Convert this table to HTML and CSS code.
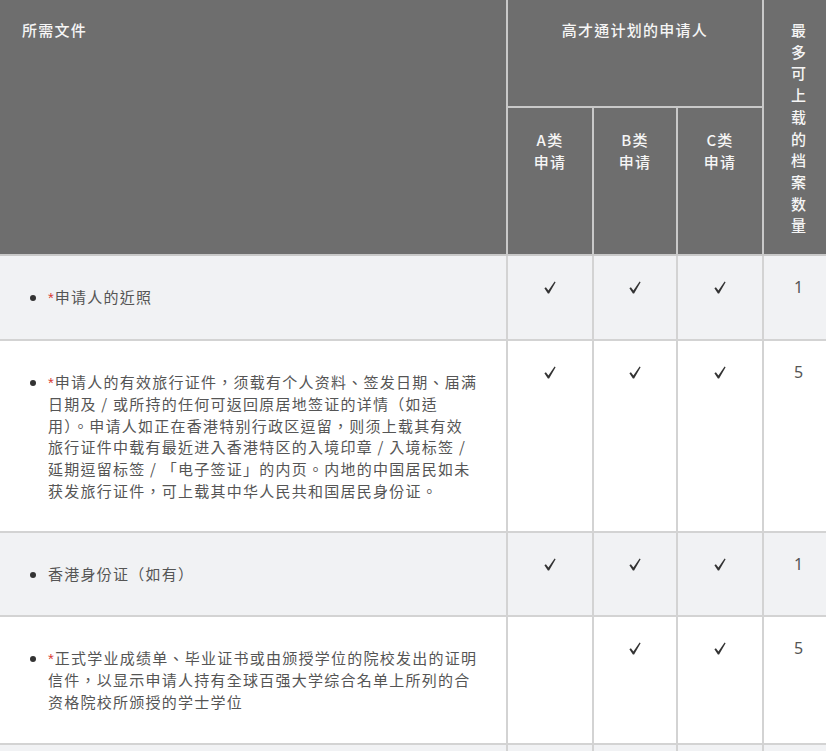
FILE: index.html
```html
<!DOCTYPE html>
<html lang="zh-Hant">
<head>
<meta charset="utf-8">
<title>所需文件</title>
<link rel="stylesheet" href="styles.css">
</head>
<body>
<table class="docs">
  <colgroup>
    <col class="c-doc">
    <col class="c-a">
    <col class="c-b">
    <col class="c-c">
    <col class="c-max">
  </colgroup>
  <thead>
    <tr>
      <th rowspan="2" class="h-doc">所需文件</th>
      <th colspan="3" class="h-group">高才通计划的申请人</th>
      <th rowspan="2" class="h-max"><div class="vert">最多可上载的档案数量</div></th>
    </tr>
    <tr>
      <th class="h-cat">A类<br>申请</th>
      <th class="h-cat">B类<br>申请</th>
      <th class="h-cat">C类<br>申请</th>
    </tr>
  </thead>
  <tbody>
    <tr class="alt">
      <td class="doc"><ul><li><span class="req">*</span>申请人的近照</li></ul></td>
      <td class="mark"><svg class="tick" viewBox="0 0 12 13" width="12" height="13"><path d="M0.4 7.2 L1.9 6.2 L4.4 9.6 L10.6 0.4 L11.6 1.2 L5.1 12.6 L3.9 12.6 Z"/></svg></td>
      <td class="mark"><svg class="tick" viewBox="0 0 12 13" width="12" height="13"><path d="M0.4 7.2 L1.9 6.2 L4.4 9.6 L10.6 0.4 L11.6 1.2 L5.1 12.6 L3.9 12.6 Z"/></svg></td>
      <td class="mark"><svg class="tick" viewBox="0 0 12 13" width="12" height="13"><path d="M0.4 7.2 L1.9 6.2 L4.4 9.6 L10.6 0.4 L11.6 1.2 L5.1 12.6 L3.9 12.6 Z"/></svg></td>
      <td class="num">1</td>
    </tr>
    <tr>
      <td class="doc"><ul><li><span class="req">*</span>申请人的有效旅行证件，须载有个人资料、签发日期、届满<br>日期及 / 或所持的任何可返回原居地签证的详情（如适<br>用）。申请人如正在香港特别行政区逗留，则须上载其有效<br>旅行证件中载有最近进入香港特区的入境印章 / 入境标签 /<br>延期逗留标签 / 「电子签证」的内页。内地的中国居民如未<br>获发旅行证件，可上载其中华人民共和国居民身份证。</li></ul></td>
      <td class="mark"><svg class="tick" viewBox="0 0 12 13" width="12" height="13"><path d="M0.4 7.2 L1.9 6.2 L4.4 9.6 L10.6 0.4 L11.6 1.2 L5.1 12.6 L3.9 12.6 Z"/></svg></td>
      <td class="mark"><svg class="tick" viewBox="0 0 12 13" width="12" height="13"><path d="M0.4 7.2 L1.9 6.2 L4.4 9.6 L10.6 0.4 L11.6 1.2 L5.1 12.6 L3.9 12.6 Z"/></svg></td>
      <td class="mark"><svg class="tick" viewBox="0 0 12 13" width="12" height="13"><path d="M0.4 7.2 L1.9 6.2 L4.4 9.6 L10.6 0.4 L11.6 1.2 L5.1 12.6 L3.9 12.6 Z"/></svg></td>
      <td class="num">5</td>
    </tr>
    <tr class="alt">
      <td class="doc"><ul><li>香港身份证（如有）</li></ul></td>
      <td class="mark"><svg class="tick" viewBox="0 0 12 13" width="12" height="13"><path d="M0.4 7.2 L1.9 6.2 L4.4 9.6 L10.6 0.4 L11.6 1.2 L5.1 12.6 L3.9 12.6 Z"/></svg></td>
      <td class="mark"><svg class="tick" viewBox="0 0 12 13" width="12" height="13"><path d="M0.4 7.2 L1.9 6.2 L4.4 9.6 L10.6 0.4 L11.6 1.2 L5.1 12.6 L3.9 12.6 Z"/></svg></td>
      <td class="mark"><svg class="tick" viewBox="0 0 12 13" width="12" height="13"><path d="M0.4 7.2 L1.9 6.2 L4.4 9.6 L10.6 0.4 L11.6 1.2 L5.1 12.6 L3.9 12.6 Z"/></svg></td>
      <td class="num">1</td>
    </tr>
    <tr>
      <td class="doc"><ul><li><span class="req">*</span>正式学业成绩单、毕业证书或由颁授学位的院校发出的证明<br>信件，以显示申请人持有全球百强大学综合名单上所列的合<br>资格院校所颁授的学士学位</li></ul></td>
      <td class="mark"></td>
      <td class="mark"><svg class="tick" viewBox="0 0 12 13" width="12" height="13"><path d="M0.4 7.2 L1.9 6.2 L4.4 9.6 L10.6 0.4 L11.6 1.2 L5.1 12.6 L3.9 12.6 Z"/></svg></td>
      <td class="mark"><svg class="tick" viewBox="0 0 12 13" width="12" height="13"><path d="M0.4 7.2 L1.9 6.2 L4.4 9.6 L10.6 0.4 L11.6 1.2 L5.1 12.6 L3.9 12.6 Z"/></svg></td>
      <td class="num">5</td>
    </tr>
    <tr class="alt">
      <td class="doc"><ul class="blank"><li>&nbsp;</li></ul></td>
      <td class="mark"></td>
      <td class="mark"></td>
      <td class="mark"></td>
      <td class="num"></td>
    </tr>
  </tbody>
</table>
</body>
</html>
```
FILE: styles.css
```css
html, body {
  margin: 0;
  padding: 0;
  overflow: hidden;
  background: #ffffff;
}

body {
  font-family: "Noto Sans CJK TC", "Noto Sans CJK SC", "Noto Sans", sans-serif;
  font-size: 15px;
  line-height: 22px;
  letter-spacing: 1.25px;
  color: #555555;
}

.docs {
  border-collapse: collapse;
  table-layout: fixed;
  width: 834px;
}

.c-doc { width: 507px; }
.c-a { width: 86px; }
.c-b { width: 84px; }
.c-c { width: 86px; }
.c-max { width: 71px; }

.docs th,
.docs td {
  border: 2px solid #d3d3d3;
  vertical-align: top;
}

.docs th:first-child,
.docs td:first-child {
  border-left: none;
}

.docs thead tr:first-child th {
  border-top: none;
}

.docs th {
  background: #6e6e6e;
  color: #f5f5f5;
  font-weight: 500;
  border-color: #c9c9c9;
}

.docs .h-doc {
  text-align: left;
  padding: 19px 22px 0;
}

.docs .h-group {
  text-align: center;
  padding: 19px 0 0;
  height: 87px;
}

.docs .h-cat {
  text-align: center;
  padding: 21px 0 0;
}

.docs .h-max {
  text-align: center;
  padding: 19px 0 18px;
}

.vert {
  width: 15px;
  margin: 0 auto;
  letter-spacing: 0;
  line-height: 21.7px;
}

.docs tbody tr.alt td {
  background: #f1f2f4;
}

.docs .doc {
  padding: 20px 22px;
}

.doc ul {
  margin: 10px 0;
  padding: 0 0 0 26px;
  white-space: nowrap;
  line-height: 21.6px;
}

.doc li {
  list-style: disc;
}

.doc li::marker {
  color: #333333;
}

.doc .blank li {
  list-style: none;
}

.req {
  color: #d93a34;
  font-family: "Liberation Sans", sans-serif;
  letter-spacing: 0;
  margin-right: 1px;
}

.docs .mark,
.docs .num {
  text-align: center;
  padding: 20px 0;
}

.tick {
  display: inline-block;
  vertical-align: middle;
  fill: #333333;
  margin-top: -3px;
}

.docs .num {
  font-family: "Noto Sans", sans-serif;
  font-size: 16px;
  letter-spacing: 0;
  color: #555555;
}
```
